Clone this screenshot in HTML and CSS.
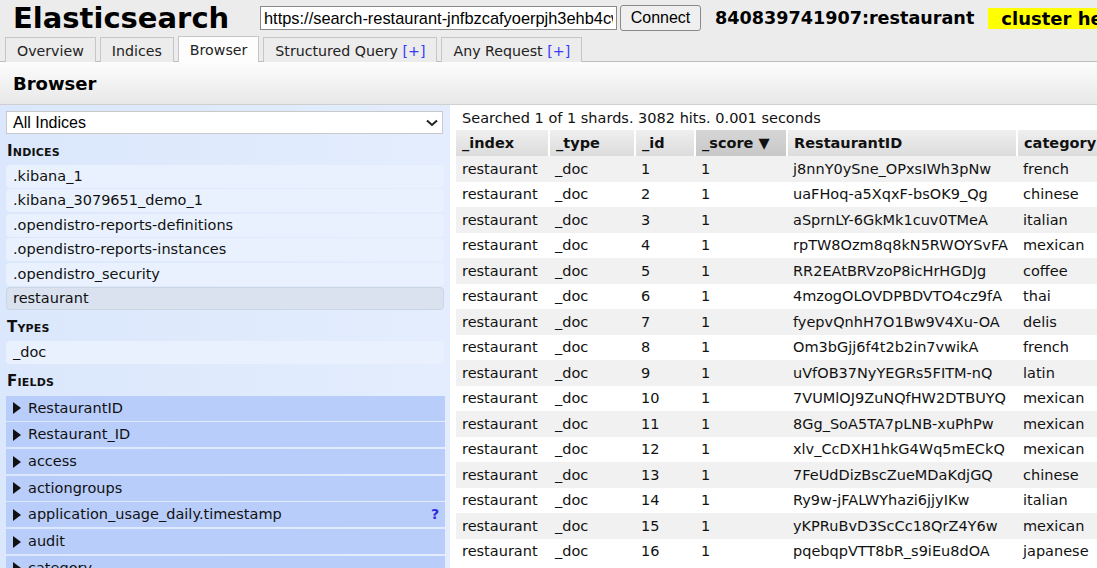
FILE: index.html
```html
<!DOCTYPE html>
<html>
<head>
<meta charset="utf-8">
<title>Elasticsearch Head</title>
<link rel="stylesheet" href="styles.css">
</head>
<body>
<div class="header">
  <h1 class="title">Elasticsearch</h1>
  <input class="url" type="text" value="https://search-restaurant-jnfbzcafyoerpjh3ehb4cwhqdgu.us-east-1.es.amazonaws.com/">
  <button class="connect">Connect</button>
  <span class="cluster-name">840839741907:restaurant</span>
  <span class="health">cluster he</span>
</div>
<div class="tabs">
  <div class="tab">Overview</div>
  <div class="tab">Indices</div>
  <div class="tab active">Browser</div>
  <div class="tab">Structured Query <span class="plus">[+]</span></div>
  <div class="tab">Any Request <span class="plus">[+]</span></div>
</div>
<div class="page-title">Browser</div>
<div class="main">
  <aside class="sidebar">
    <div class="select">
      <span>All Indices</span>
      <svg class="chev" width="12" height="8" viewBox="0 0 12 8"><path d="M1 1.5 L6 6 L11 1.5" fill="none" stroke="#222" stroke-width="2"/></svg>
    </div>
    <div class="section-head first">Indices</div>
    <div class="item">.kibana_1</div>
    <div class="item">.kibana_3079651_demo_1</div>
    <div class="item">.opendistro-reports-definitions</div>
    <div class="item">.opendistro-reports-instances</div>
    <div class="item">.opendistro_security</div>
    <div class="item selected">restaurant</div>
    <div class="section-head">Types</div>
    <div class="item">_doc</div>
    <div class="section-head last">Fields</div>
    <div class="field"><span class="tri"></span>RestaurantID</div>
    <div class="field"><span class="tri"></span>Restaurant_ID</div>
    <div class="field"><span class="tri"></span>access</div>
    <div class="field"><span class="tri"></span>actiongroups</div>
    <div class="field"><span class="tri"></span>application_usage_daily.timestamp<span class="help">?</span></div>
    <div class="field"><span class="tri"></span>audit</div>
    <div class="field"><span class="tri"></span>category</div>
  </aside>
  <section class="results">
    <div class="summary">Searched 1 of 1 shards. 3082 hits. 0.001 seconds</div>
    <table class="grid">
      <colgroup>
        <col class="c-index"><col class="c-type"><col class="c-id"><col class="c-score"><col class="c-rid"><col class="c-cat">
      </colgroup>
      <thead>
        <tr><th>_index</th><th>_type</th><th>_id</th><th class="sorted">_score ▼</th><th>RestaurantID</th><th>category</th></tr>
      </thead>
      <tbody>
        <tr><td>restaurant</td><td>_doc</td><td>1</td><td>1</td><td>j8nnY0ySne_OPxsIWh3pNw</td><td>french</td></tr>
        <tr><td>restaurant</td><td>_doc</td><td>2</td><td>1</td><td>uaFHoq-a5XqxF-bsOK9_Qg</td><td>chinese</td></tr>
        <tr><td>restaurant</td><td>_doc</td><td>3</td><td>1</td><td>aSprnLY-6GkMk1cuv0TMeA</td><td>italian</td></tr>
        <tr><td>restaurant</td><td>_doc</td><td>4</td><td>1</td><td>rpTW8Ozm8q8kN5RWOYSvFA</td><td>mexican</td></tr>
        <tr><td>restaurant</td><td>_doc</td><td>5</td><td>1</td><td>RR2EAtBRVzoP8icHrHGDJg</td><td>coffee</td></tr>
        <tr><td>restaurant</td><td>_doc</td><td>6</td><td>1</td><td>4mzogOLOVDPBDVTO4cz9fA</td><td>thai</td></tr>
        <tr><td>restaurant</td><td>_doc</td><td>7</td><td>1</td><td>fyepvQnhH7O1Bw9V4Xu-OA</td><td>delis</td></tr>
        <tr><td>restaurant</td><td>_doc</td><td>8</td><td>1</td><td>Om3bGjj6f4t2b2in7vwikA</td><td>french</td></tr>
        <tr><td>restaurant</td><td>_doc</td><td>9</td><td>1</td><td>uVfOB37NyYEGRs5FITM-nQ</td><td>latin</td></tr>
        <tr><td>restaurant</td><td>_doc</td><td>10</td><td>1</td><td>7VUMlOJ9ZuNQfHW2DTBUYQ</td><td>mexican</td></tr>
        <tr><td>restaurant</td><td>_doc</td><td>11</td><td>1</td><td>8Gg_SoA5TA7pLNB-xuPhPw</td><td>mexican</td></tr>
        <tr><td>restaurant</td><td>_doc</td><td>12</td><td>1</td><td>xlv_CcDXH1hkG4Wq5mECkQ</td><td>mexican</td></tr>
        <tr><td>restaurant</td><td>_doc</td><td>13</td><td>1</td><td>7FeUdDizBscZueMDaKdjGQ</td><td>chinese</td></tr>
        <tr><td>restaurant</td><td>_doc</td><td>14</td><td>1</td><td>Ry9w-jFALWYhazi6jjyIKw</td><td>italian</td></tr>
        <tr><td>restaurant</td><td>_doc</td><td>15</td><td>1</td><td>yKPRuBvD3ScCc18QrZ4Y6w</td><td>mexican</td></tr>
        <tr><td>restaurant</td><td>_doc</td><td>16</td><td>1</td><td>pqebqpVTT8bR_s9iEu8dOA</td><td>japanese</td></tr>
      </tbody>
    </table>
  </section>
</div>
</body>
</html>
```

FILE: styles.css
```css
* { box-sizing: border-box; }
html, body { margin: 0; padding: 0; }
body {
  background: #ececec;
  font-family: "DejaVu Sans", Verdana, sans-serif;
  font-size: 14.5px;
  color: #000;
  overflow: hidden;
  height: 568px;
}

.header {
  display: flex;
  align-items: center;
  height: 36px;
  white-space: nowrap;
  overflow: hidden;
}
.header > * { flex: none; }
.title {
  margin: 0 0 0 13px;
  font-size: 29px;
  font-weight: bold;
  width: 247px;
  line-height: 32px;
}
.url {
  width: 357px;
  height: 24px;
  border: 1px solid #8a8a8a;
  padding: 0 3px;
  font-family: "Liberation Sans", Arial, sans-serif;
  font-size: 16.4px;
  color: #000;
  background: #fff;
  margin: 0;
}
.connect {
  margin: 0 0 0 3px;
  width: 81px;
  height: 26px;
  font-family: "Liberation Sans", Arial, sans-serif;
  font-size: 16px;
  background: #efefef;
  border: 1px solid #8a8a8a;
  border-radius: 3px;
  padding: 0;
  color: #000;
}
.cluster-name {
  margin-left: 14px;
  font-weight: bold;
  font-size: 17.6px;
}
.health {
  margin-left: 14px;
  background: #ffff00;
  font-weight: bold;
  font-size: 18px;
  height: 21px;
  line-height: 21px;
  padding: 0 12px 0 13px;
}

.tabs {
  display: flex;
  gap: 4px;
  padding-left: 5px;
  height: 26px;
  align-items: flex-end;
  border-bottom: 1px solid #bdbdbd;
}
.tab {
  height: 25px;
  line-height: 27px;
  padding: 0 11px;
  border: 1px solid #c6c6c6;
  border-bottom: none;
  background: #ececec;
  color: #222;
  margin-bottom: -1px;
  font-size: 14.2px;
  overflow: hidden;
}
.tab.active {
  background: #fdfdfd;
  height: 26px;
}
.plus { color: #3a3aff; }

.page-title {
  height: 43px;
  line-height: 43px;
  padding-left: 13px;
  font-weight: bold;
  font-size: 18px;
  background: linear-gradient(#fdfdfd, #e8e8e8);
  border-bottom: 1px solid #cfcfcf;
}

.main {
  display: flex;
  height: 500px;
}
.sidebar {
  width: 450px;
  flex: none;
  padding: 6px 6px 0 6px;
  background: linear-gradient(90deg, #dbe7fc, #e3edfd);
  overflow: hidden;
}
.select {
  height: 23px;
  background: #fff;
  border: 1px solid #c9c9c9;
  margin-right: 1px;
  display: flex;
  align-items: center;
  justify-content: space-between;
  padding: 0 4px 0 6px;
  font-family: "Liberation Sans", Arial, sans-serif;
  font-size: 16px;
}
.chev { margin-top: 1px; }
.section-head {
  font-weight: bold;
  font-variant: small-caps;
  font-size: 15px;
  height: 30px;
  line-height: 32px;
  padding-left: 1px;
  color: #111;
  letter-spacing: 0.2px;
}
.section-head.first { height: 31px; line-height: 34px; }
.section-head.last { height: 30px; line-height: 30px; }
.item {
  height: 23px;
  line-height: 22px;
  margin-bottom: 1.4px;
  padding-left: 7px;
  background: #e9f1fe;
  border-radius: 4px;
  color: #111;
}
.item.selected {
  background: #d9e2ee;
  border: 1px solid #cad6e4;
  padding-left: 6px;
  line-height: 21px;
}
.field {
  height: 25px;
  line-height: 25px;
  margin-bottom: 1.7px;
  background: #b9cdfb;
  display: flex;
  align-items: center;
  padding-left: 7px;
  color: #111;
  margin-right: -1px;
}
.tri {
  width: 0;
  height: 0;
  border-top: 6px solid transparent;
  border-bottom: 6px solid transparent;
  border-left: 8px solid #111;
  margin-right: 7px;
}
.help {
  margin-left: auto;
  margin-right: 6px;
  color: #2b2bdc;
  font-weight: bold;
  font-size: 14px;
}

.results {
  flex: 1;
  background: #fff;
  padding-left: 6px;
  overflow: hidden;
}
.summary {
  height: 25px;
  line-height: 26px;
  padding-left: 6px;
  color: #111;
}
.grid {
  border-collapse: collapse;
  table-layout: fixed;
  width: 720px;
  white-space: nowrap;
}
.c-index { width: 93px; }
.c-type { width: 86px; }
.c-id { width: 60px; }
.c-score { width: 92px; }
.c-rid { width: 230px; }
.c-cat { width: 159px; }
.grid th {
  height: 26px;
  text-align: left;
  padding: 0 0 0 6px;
  font-weight: bold;
  background: linear-gradient(#efefef, #dcdcdc);
  border-left: 2px solid #fff;
  color: #111;
}
.grid th:first-child { border-left: none; }
.grid th.sorted { background: linear-gradient(#d6d6d6, #c8c8c8); }
.grid td {
  height: 25.5px;
  padding: 0 0 0 6px;
  color: #111;
  overflow: hidden;
}
.grid tbody tr:nth-child(odd) td { background: #f1f1f1; }
.grid tbody tr:nth-child(even) td { background: #fff; }
```
